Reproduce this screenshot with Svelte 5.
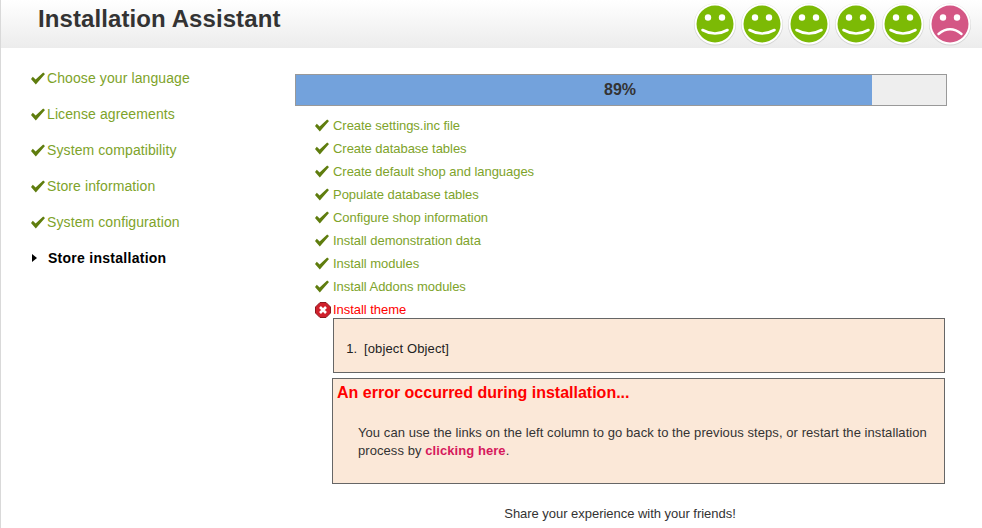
<script>
  const sidebar = [
    "Choose your language",
    "License agreements",
    "System compatibility",
    "Store information",
    "System configuration"
  ];
  const steps = [
    "Create settings.inc file",
    "Create database tables",
    "Create default shop and languages",
    "Populate database tables",
    "Configure shop information",
    "Install demonstration data",
    "Install modules",
    "Install Addons modules"
  ];
  const moods = [true, true, true, true, true, false];
</script>

<div class="page">
  <header>
    <h1>Installation Assistant</h1>
    <div class="moods">
      {#each moods as happy}
        <svg class="mood" width="44" height="44" viewBox="0 0 44 44">
          <circle cx="22" cy="22.5" r="21" fill="#d4d4d4" />
          <circle cx="22" cy="22" r="20.5" fill="#fff" />
          <circle cx="22" cy="22" r="18.5" fill={happy ? "#7cba05" : "#d45785"} />
          <circle cx="15" cy="15.5" r="3.2" fill="#fff" />
          <circle cx="29" cy="15.5" r="3.2" fill="#fff" />
          {#if happy}
            <path d="M9.5 28 Q22 35 34.5 28" fill="none" stroke="#fff" stroke-width="2.6" stroke-linecap="round" />
          {:else}
            <path d="M10.5 32 Q22 22.5 33.5 32" fill="none" stroke="#fff" stroke-width="2.4" stroke-linecap="round" />
          {/if}
        </svg>
      {/each}
    </div>
  </header>

  <div class="main">
    <ul class="sidebar">
      {#each sidebar as item}
        <li class="done">
          <svg width="14" height="13" viewBox="1 1 14 12"><path d="M1 7.5 L2.8 5.2 L5.6 8 L13.2 1 L15 2.6 L5.8 13 Z" fill="#5f7d0e" /></svg>
          {item}
        </li>
      {/each}
      <li class="current">
        <svg width="5" height="8" viewBox="0 0 5 8"><path d="M0 0 L5 4 L0 8 Z" fill="#000" /></svg>
        Store installation
      </li>
    </ul>

    <div class="content">
      <div class="progress">
        <div class="fill" style="width: {(576 / 650) * 100}%"></div>
        <span>89%</span>
      </div>

      <ul class="steps">
        {#each steps as step}
          <li>
            <svg width="14" height="13" viewBox="1 1 14 12"><path d="M1 7.5 L2.8 5.2 L5.6 8 L13.2 1 L15 2.6 L5.8 13 Z" fill="#5f7d0e" /></svg>
            {step}
          </li>
        {/each}
        <li class="failed">
          <svg width="16" height="16" viewBox="0 0 16 16">
            <path d="M5 .5 H11 L15.5 5 V11 L11 15.5 H5 L.5 11 V5 Z" fill="#d0202c" stroke="#8c1a20" />
            <path d="M5 5 L11 11 M11 5 L5 11" stroke="#fff" stroke-width="2.6" />
          </svg>
          Install theme
        </li>
      </ul>

      <div class="log">
        <ol><li>[object Object]</li></ol>
      </div>

      <div class="error">
        <h2>An error occurred during installation...</h2>
        <p>You can use the links on the left column to go back to the previous steps, or restart the installation process by <a href="#top">clicking here</a>.</p>
      </div>

      <p class="share">Share your experience with your friends!</p>
    </div>
  </div>
</div>

<style>
  :global(body) {
    background: #fff;
    overflow: hidden;
  }
  .page {
    height: 528px;
    border-left: 1px solid #d9d9d9;
    font-family: "Liberation Sans", Arial, sans-serif;
    box-sizing: border-box;
    overflow: hidden;
  }
  header {
    height: 48px;
    margin-left: -1px;
    background: linear-gradient(#fff, #ececec);
    display: flex;
    justify-content: space-between;
  }
  h1 {
    margin: 0 0 0 38px;
    font-size: 24px;
    line-height: 38px;
    font-weight: bold;
    color: #333;
    letter-spacing: 0.09px;
  }
  .moods {
    display: flex;
    gap: 3px;
    padding: 2px 10px 0 0;
  }
  .mood {
    display: block;
  }
  .main {
    display: flex;
  }
  ul {
    list-style: none;
    margin: 0;
    padding: 0;
  }
  .sidebar {
    width: 294px;
    padding: 12px 0 0 30px;
    box-sizing: border-box;
    font-size: 14px;
    letter-spacing: 0.1px;
  }
  .sidebar li {
    height: 36px;
    display: flex;
    align-items: center;
    gap: 2px;
    color: #7ea32a;
  }
  .sidebar .current {
    color: #000;
    font-weight: bold;
    padding-left: 1px;
    gap: 11px;
    letter-spacing: 0.27px;
  }
  .content {
    width: 652px;
  }
  .progress {
    margin-top: 26px;
    height: 32px;
    box-sizing: border-box;
    border: 1px solid #999;
    background: #eee;
    position: relative;
    text-align: center;
    font-size: 16px;
    font-weight: bold;
    line-height: 30px;
    color: #333;
    padding-right: 2px;
  }
  .fill {
    position: absolute;
    left: 0;
    top: 0;
    bottom: 0;
    background: #73a2dc;
  }
  .progress span {
    position: relative;
  }
  .steps {
    margin: 8px 0 0 20px;
    font-size: 13px;
    letter-spacing: -0.04px;
  }
  .steps li {
    height: 23px;
    display: flex;
    align-items: center;
    gap: 4px;
    color: #7ea32a;
  }
  .steps .failed {
    color: #f00;
    gap: 2px;
  }
  .log {
    margin: -3px 0 0 38px;
    width: 612px;
    height: 55px;
    box-sizing: border-box;
    border: 1px solid #666;
    background: #fbe8d8;
    font-size: 13px;
    letter-spacing: 0.13px;
    color: #222;
  }
  ol {
    margin: 0;
    padding: 22px 0 0 27px;
  }
  ol li {
    padding-left: 3px;
  }
  .error {
    margin: 5px 0 0 37px;
    width: 613px;
    height: 106px;
    box-sizing: border-box;
    border: 1px solid #666;
    background: #fbe8d8;
  }
  h2 {
    margin: 0;
    padding: 4px 0 0 4px;
    font-size: 16px;
    line-height: 20px;
    color: #f00;
  }
  .error p {
    margin: 21px 8px 0 25px;
    font-size: 13px;
    line-height: 18px;
    color: #333;
    letter-spacing: 0.07px;
  }
  .error a {
    color: #d6195c;
    font-weight: bold;
    text-decoration: none;
  }
  .share {
    margin: 22px 0 0;
    padding-right: 2px;
    text-align: center;
    font-size: 13px;
    letter-spacing: -0.03px;
    color: #333;
  }
</style>
